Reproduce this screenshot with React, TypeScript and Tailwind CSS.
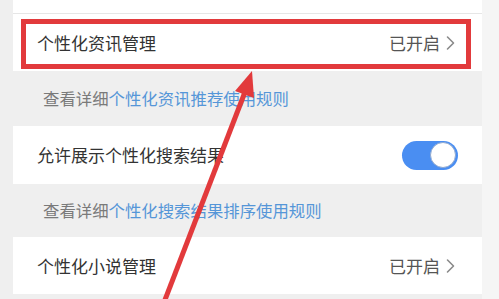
import React from 'react';

const font = { fontFamily: '"Noto Sans CJK SC", "Noto Sans", sans-serif' };

const Chevron = () => (
  <svg className="w-[9px] h-[16px] ml-[6px]" viewBox="0 0 9 16" fill="none" stroke="#8a8a8a" strokeWidth={1.6}>
    <path d="M1.5 2l6 6-6 6" strokeLinecap="round" strokeLinejoin="round" />
  </svg>
);

const Toggle = () => (
  <div className="w-[56px] h-[29px] rounded-full bg-[#4a8ef2] flex items-center justify-end px-[2px]">
    <div className="w-[26px] h-[26px] rounded-full bg-white border border-[#8fa9d0]" />
  </div>
);

const Helper = ({ link, h }: { link: string; h: string }) => (
  <div className={`${h} flex items-center pl-[30px] text-[16.4px] text-[#7a7a7a]`}>
    查看详细<span className="text-[#5596d8]">{link}</span>
  </div>
);

export default function App() {
  return (
    <div className="relative w-[499px] h-[299px] overflow-hidden bg-[#efefef] flex" style={font}>
      <div className="w-[482px] pl-[13px] flex flex-col">
        {/* top card + first row */}
        <div className="bg-white">
          <div className="h-[14px] border-b border-[#e6e6e6]" />
          <div className="relative h-[57px] flex items-center justify-between pl-[24px] pr-[27px] text-[17px] text-[#333]">
            <span>个性化资讯管理</span>
            <span className="flex items-center text-[#555]">
              已开启
              <Chevron />
            </span>
            <div className="absolute left-[8px] top-[5px] w-[450px] h-[50px] border-[5px] border-[#e23a3c]" />
          </div>
        </div>

        <Helper link="个性化资讯推荐使用规则" h="h-[55px]" />

        <div className="bg-white h-[58px] flex items-center justify-between pl-[24px] pr-[24px] text-[17px] text-[#333]">
          <span>允许展示个性化搜索结果</span>
          <Toggle />
        </div>

        <Helper link="个性化搜索结果排序使用规则" h="h-[53px]" />

        <div className="bg-white h-[57px] flex items-center justify-between pl-[24px] pr-[27px] text-[17px] text-[#333]">
          <span>个性化小说管理</span>
          <span className="flex items-center text-[#555]">
            已开启
            <Chevron />
          </span>
        </div>
      </div>
      <div className="flex-1 bg-[#f5f5f5]" />

      {/* annotation arrow */}
      <svg className="absolute inset-0 pointer-events-none" width="499" height="299" viewBox="0 0 499 299">
        <line x1="163" y1="305" x2="245" y2="92" stroke="#e23a3c" strokeWidth="5" />
        <polygon points="252,71 254,98 235,91" fill="#e23a3c" />
      </svg>
    </div>
  );
}
